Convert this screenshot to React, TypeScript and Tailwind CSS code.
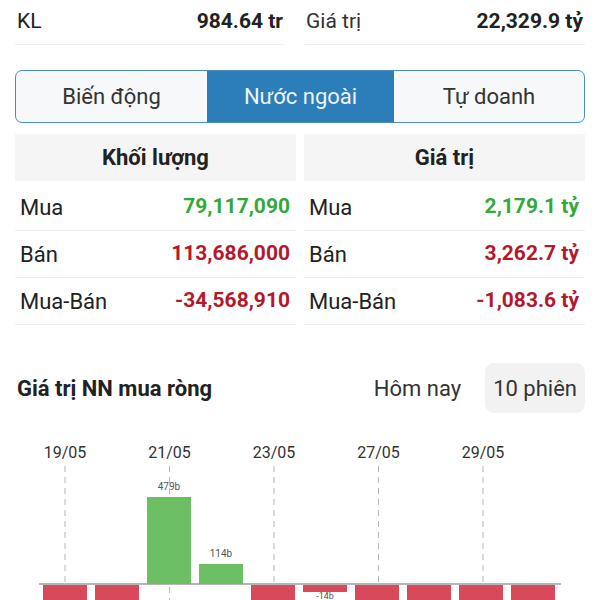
import React from "react";

const bars = [
  { v: -1, label: "" },
  { v: -1, label: "" },
  { v: 479, label: "479b" },
  { v: 114, label: "114b" },
  { v: -1, label: "" },
  { v: -14, label: "-14b" },
  { v: -1, label: "" },
  { v: -1, label: "" },
  { v: -1, label: "" },
  { v: -1, label: "" },
];

const dates = ["19/05", "21/05", "23/05", "27/05", "29/05"];

function Chart() {
  const base = 154;
  return (
    <svg width="600" height="170" viewBox="0 0 600 170" className="block">
      {dates.map((d, i) => {
        const x = 65 + i * 104.5;
        return (
          <g key={d}>
            <text x={x} y={28} textAnchor="middle" fontSize="16" fill="#333" fontFamily="Roboto, sans-serif">
              {d}
            </text>
            <line x1={x} y1={36} x2={x} y2={170} stroke="#b5b5b5" strokeWidth="1" strokeDasharray="6 5" />
          </g>
        );
      })}
      <line x1={39} y1={base} x2={561} y2={base} stroke="#9e9e9e" strokeWidth="1.5" />
      {bars.map((b, i) => {
        const x = 43 + i * 52;
        if (b.v > 0) {
          const h = b.v === 479 ? 87 : 20;
          return (
            <g key={i}>
              <rect x={x} y={base - h} width={44} height={h} fill="#6cbf63" />
              <text x={x + 22} y={base - h - 7} textAnchor="middle" fontSize="10" fill="#555" fontFamily="Roboto, sans-serif">
                {b.label}
              </text>
            </g>
          );
        }
        const h = b.v === -14 ? 7 : 30;
        return (
          <g key={i}>
            <rect x={x} y={base + 1} width={44} height={h} fill="#d9495c" />
            {b.label && (
              <text x={x + 22} y={base + 15} textAnchor="middle" fontSize="9" fill="#555" fontFamily="Roboto, sans-serif">
                {b.label}
              </text>
            )}
          </g>
        );
      })}
    </svg>
  );
}

function Row({ label, value, color }: { label: string; value: string; color: string }) {
  return (
    <div className="flex h-[47px] items-center justify-between border-b border-[#eeeeee] pl-[5px] pr-[6px]">
      <span className="text-[22px] text-[#222]">{label}</span>
      <span className={`text-[21px] font-bold ${color}`}>{value}</span>
    </div>
  );
}

export default function App() {
  return (
    <div className="h-[600px] w-[600px] overflow-hidden bg-white px-[15px] font-['Roboto',sans-serif] text-[#222]">
      {/* Summary */}
      <div className="flex gap-5">
        <div className="flex h-[45px] w-[270px] items-center justify-between border-b border-[#eeeeee] pl-[2px] pr-[2px]">
          <span className="text-[21px]">KL</span>
          <span className="text-[21px] font-bold">984.64 tr</span>
        </div>
        <div className="flex h-[45px] flex-1 items-center justify-between border-b border-[#eeeeee] pl-[1px] pr-[2px]">
          <span className="text-[21px] text-[#333]">Giá trị</span>
          <span className="text-[21px] font-bold">22,329.9 tỷ</span>
        </div>
      </div>

      {/* Tabs */}
      <div className="mt-[25px] flex h-[53px] overflow-hidden rounded-[7px] border-[1.5px] border-[#4b8dbd] bg-[#f6f8fa]">
        <div className="flex w-[191px] items-center justify-center text-[22px] text-[#333]">Biến động</div>
        <div className="flex w-[187px] items-center justify-center bg-[#2b7eba] text-[22px] text-[#eef4fa]">Nước ngoài</div>
        <div className="flex flex-1 items-center justify-center text-[22px] text-[#333]">Tự doanh</div>
      </div>

      {/* Table */}
      <div className="mt-[11px] flex gap-2">
        <div className="flex-1">
          <div className="mb-[3px] flex h-[47px] items-center justify-center bg-[#f5f5f5] text-[22px] font-bold">Khối lượng</div>
          <Row label="Mua" value="79,117,090" color="text-[#35a83a]" />
          <Row label="Bán" value="113,686,000" color="text-[#b3192c]" />
          <Row label="Mua-Bán" value="-34,568,910" color="text-[#b3192c]" />
        </div>
        <div className="flex-1">
          <div className="mb-[3px] flex h-[47px] items-center justify-center bg-[#f5f5f5] text-[22px] font-bold">Giá trị</div>
          <Row label="Mua" value="2,179.1 tỷ" color="text-[#35a83a]" />
          <Row label="Bán" value="3,262.7 tỷ" color="text-[#b3192c]" />
          <Row label="Mua-Bán" value="-1,083.6 tỷ" color="text-[#b3192c]" />
        </div>
      </div>

      {/* Chart header */}
      <div className="mt-[38px] flex h-[50px] items-center justify-between pl-[2px]">
        <span className="text-[22px] font-bold">Giá trị NN mua ròng</span>
        <div className="flex h-full items-center">
          <span className="mr-6 text-[22px] text-[#333]">Hôm nay</span>
          <span className="flex h-full items-center rounded-[9px] bg-[#f2f2f2] px-[8px] text-[22px] text-[#333]">10 phiên</span>
        </div>
      </div>

      {/* Chart */}
      <div className="-mx-[15px] mt-[17px] h-[170px]">
        <Chart />
      </div>
    </div>
  );
}
